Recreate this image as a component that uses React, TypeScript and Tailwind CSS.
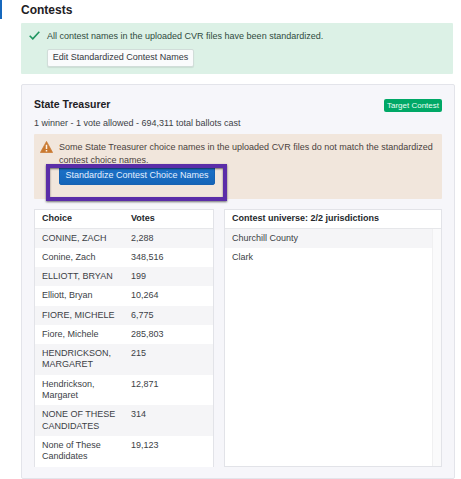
const choices: [string, string][] = [
  ['CONINE, ZACH', '2,288'],
  ['Conine, Zach', '348,516'],
  ['ELLIOTT, BRYAN', '199'],
  ['Elliott, Bryan', '10,264'],
  ['FIORE, MICHELE', '6,775'],
  ['Fiore, Michele', '285,803'],
  ['HENDRICKSON, MARGARET', '215'],
  ['Hendrickson, Margaret', '12,871'],
  ['NONE OF THESE CANDIDATES', '314'],
  ['None of These Candidates', '19,123'],
]

function ChoiceTable() {
  return (
    <div className="flex h-[258px] w-[180px] flex-col border border-[#e2e3e8] bg-white">
      <div className="flex h-[19px] shrink-0 items-center border-b border-[#e6e7ea] pl-[7px] font-bold text-[#24282c]">
        <span className="w-[89px]">Choice</span>
        <span>Votes</span>
      </div>
      {choices.map(([name, votes]) => (
        <div
          key={name}
          className="flex pt-[4px] pb-[3.6px] pl-[7px] leading-[11.55px] odd:bg-white even:bg-[#f5f5f7]"
        >
          <span className="w-[89px] pr-[10px]">{name}</span>
          <span>{votes}</span>
        </div>
      ))}
    </div>
  )
}

function JurisdictionTable() {
  return (
    <div className="flex h-[258px] w-[218px] flex-col border border-[#e2e3e8] bg-white">
      <div className="flex h-[19px] shrink-0 items-center border-b border-[#e6e7ea] pl-[7px] font-bold text-[#24282c]">
        Contest universe: 2/2 jurisdictions
      </div>
      <div className="flex flex-1">
        <div className="flex-1 leading-[19.15px]">
          <div className="bg-[#f5f5f7] pl-[7px]">Churchill County</div>
          <div className="pl-[7px]">Clark</div>
        </div>
        <div className="w-[9px] border-l border-[#f0f0f1] bg-[#fafafb]" />
      </div>
    </div>
  )
}

export default function App() {
  return (
    <div className="relative flex h-[479px] w-[461px] overflow-hidden bg-white font-['Liberation_Sans',Arial,sans-serif] text-[9px] text-[#3c4146]">
      <div className="h-[19px] w-[2px] bg-[#1668bd]" />
      <main className="ml-[19px] w-[434px]">
        <h1 className="mt-[3px] h-[20px] text-[12px] leading-[14px] font-bold text-[#1d2024]">Contests</h1>

        <section className="flex h-[51px] w-[432px] rounded-[1px] bg-[#dcf1e6] pt-[8px] pl-[8px] text-[#304b40]">
          <svg className="h-[9px] w-[11px]" viewBox="0 0 11 9" fill="none" stroke="#1f9560" strokeWidth="1.6">
            <path d="M.7 4.8 3.8 7.9 10.3.8" />
          </svg>
          <div className="ml-[7px]">
            <p className="leading-[11px] whitespace-nowrap">
              All contest names in the uploaded CVR files have been standardized.
            </p>
            <button className="mt-[7px] flex h-[18px] w-[147px] items-center justify-center rounded-[2px] border border-[#d1ddd9] bg-[#fafbfc] whitespace-nowrap text-[#34393e] shadow-[0_1px_1px_rgba(0,0,0,0.08)]">
              Edit Standardized Contest Names
            </button>
          </div>
        </section>

        <section className="mt-[10px] h-[395px] w-[434px] rounded-[2px] border border-[#e3e4ea] bg-[#f6f6fa] pt-[12px] pr-[12px] pl-[12px]">
          <header className="flex h-[16px] items-center justify-between">
            <h2 className="text-[10.5px] font-bold text-[#1d2024]">State Treasurer</h2>
            <span className="mt-[1px] flex h-[13px] w-[58px] items-center justify-center rounded-[2px] bg-[#00a866] text-[8px] whitespace-nowrap text-[#eafff5]">
              Target Contest
            </span>
          </header>
          <p className="mt-[4px] leading-[12px]">1 winner - 1 vote allowed - 694,311 total ballots cast</p>

          <div className="mt-[5px] flex h-[65px] w-[408px] rounded-[1px] bg-[#f1e6dc] pt-[7px] pl-[6px] text-[#4b423d]">
            <svg className="h-[12px] w-[13px]" viewBox="0 0 13 12">
              <path d="M6.5.4 12.6 11.5H.4Z" fill="#c97930" stroke="#c97930" strokeWidth=".7" strokeLinejoin="round" />
              <path d="M6.5 3.8V8M6.5 9V10.4" stroke="#fff2e4" strokeWidth="1.5" />
            </svg>
            <div className="relative ml-[6px]">
              <p className="leading-[13px] whitespace-nowrap">
                Some State Treasurer choice names in the uploaded CVR files do not match the standardized
                <br />
                contest choice names.
              </p>
              <button className="mt-[-1px] flex h-[19px] w-[156px] items-center justify-center rounded-[2px] border border-[#1762b2] bg-linear-to-b from-[#1c72c9] to-[#1565b8] whitespace-nowrap text-[#e4f0ff]">
                Standardize Contest Choice Names
              </button>
              <div className="absolute top-[23px] left-[-13px] h-[37px] w-[181px] border-4 border-[#5b2da8] shadow-[0_1px_2px_rgba(0,0,0,0.55),inset_0_1px_2px_rgba(0,0,0,0.55)]" />
            </div>
          </div>

          <div className="mt-[10px] flex justify-between">
            <ChoiceTable />
            <JurisdictionTable />
          </div>
        </section>
      </main>
    </div>
  )
}
